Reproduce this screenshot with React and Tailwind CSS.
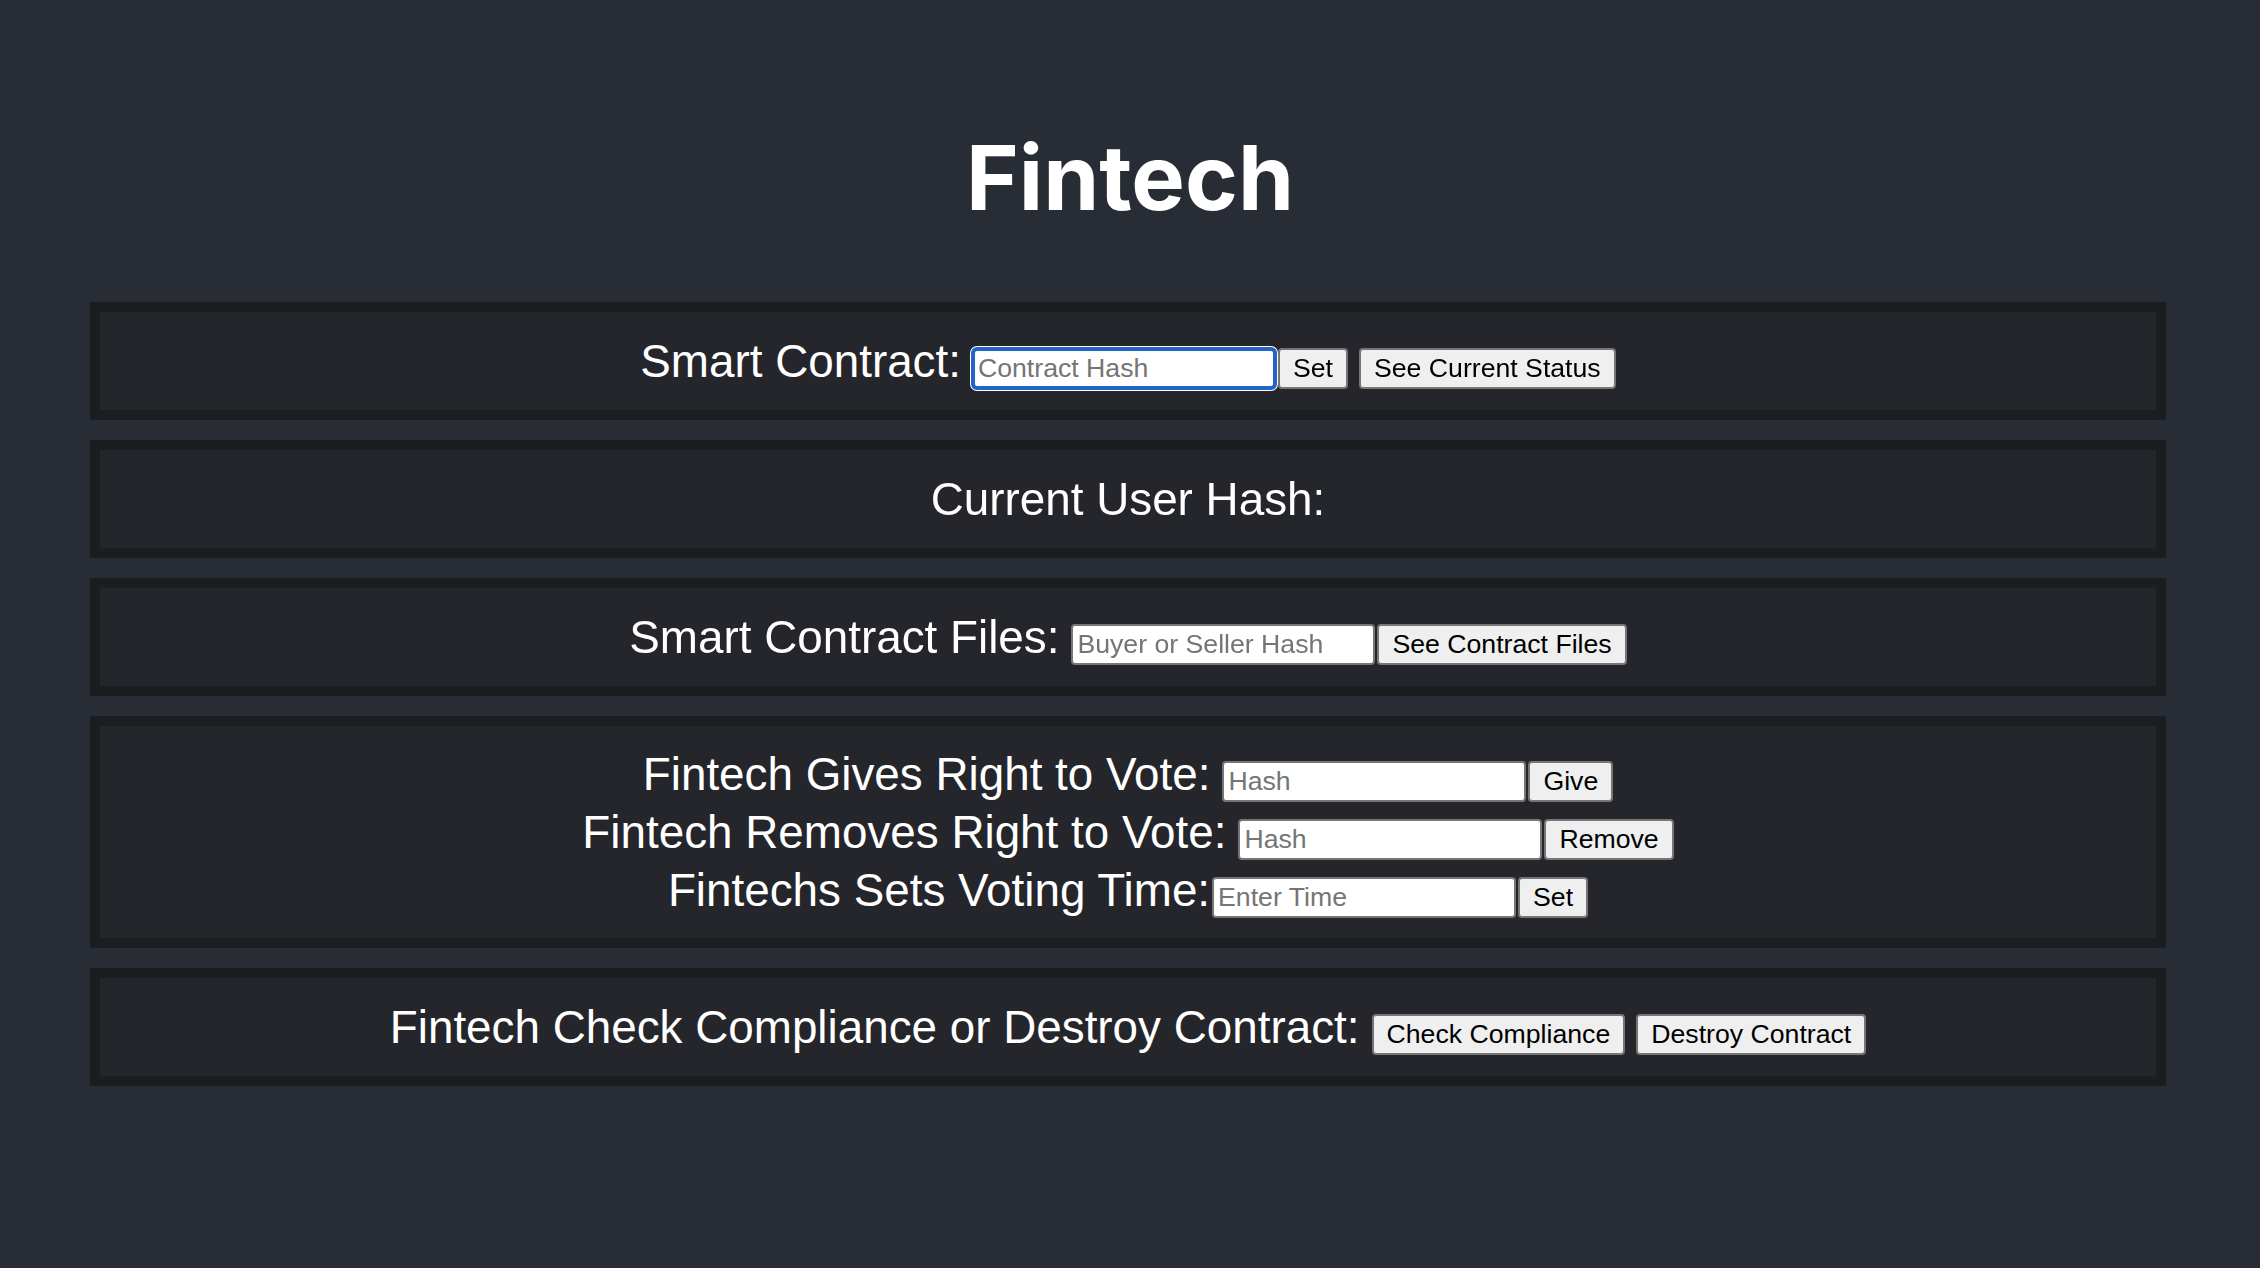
import React from "react";

const inputCls =
    "w-[304px] h-[41px] px-[4px] bg-white border-2 border-[#767676] rounded-[4px] text-[26.67px] text-black placeholder:text-[#757575] outline-none"
const focusCls =
    "w-[304px] h-[41px] px-[3px] bg-white border-[3px] border-[#2563cc] rounded-[5px] text-[26.67px] text-black placeholder:text-[#757575] outline-none shadow-[0_0_0_1px_#2563cc,0_0_0_2px_#ffffff]"
const btnCls =
    "h-[41px] px-[13px] bg-[#efefef] border-2 border-[#767676] rounded-[4px] text-[26.67px] text-black leading-none"

function Box({children, tall}) {
    return (
        <div
            className={
                "border-[10px] border-[#1c1d21] bg-[#25262b] flex flex-col justify-center pt-[2px] " +
                (tall ? "h-[232px]" : "h-[118px]")
            }
        >
            {children}
        </div>
    )
}

function Row({children}) {
    return <div className="flex justify-center items-baseline text-white">{children}</div>
}

export default function App() {
    return (
        <div
            className="w-[2260px] h-[1268px] bg-[#282c34] overflow-hidden"
            style={{fontFamily: '"Liberation Sans", Arial, sans-serif'}}
        >
            <h1
                className="pt-[133px] mb-[80px] text-center text-white font-bold text-[90px] leading-none h-[222px]"
                style={{fontFamily: 'Inter, "Liberation Sans", sans-serif'}}
            >
                Fintech
            </h1>

            <div className="ml-[90px] w-[2076px] flex flex-col gap-[20px] text-[45.8px]">
                <Box>
                    <Row>
                        <span className="mr-[11px]">Smart Contract:</span>
                        <input className={focusCls} placeholder="Contract Hash" autoFocus/>
                        <button className={btnCls + " ml-[2px]"}>Set</button>
                        <button className={btnCls + " ml-[11px]"}>See Current Status</button>
                    </Row>
                </Box>

                <Box>
                    <Row>
                        <span>Current User Hash:</span>
                    </Row>
                </Box>

                <Box>
                    <Row>
                        <span className="mr-[12px]">Smart Contract Files:</span>
                        <input className={inputCls} placeholder="Buyer or Seller Hash"/>
                        <button className={btnCls + " ml-[2px]"}>See Contract Files</button>
                    </Row>
                </Box>

                <Box tall>
                    <div className="flex flex-col">
                        <div className="h-[58px] flex flex-col justify-center">
                            <Row>
                                <span className="mr-[12px]">Fintech Gives Right to Vote:</span>
                                <input className={inputCls} placeholder="Hash"/>
                                <button className={btnCls + " ml-[2px]"}>Give</button>
                            </Row>
                        </div>
                        <div className="h-[58px] flex flex-col justify-center">
                            <Row>
                                <span className="mr-[12px]">Fintech Removes Right to Vote:</span>
                                <input className={inputCls} placeholder="Hash"/>
                                <button className={btnCls + " ml-[2px]"}>Remove</button>
                            </Row>
                        </div>
                        <div className="h-[58px] flex flex-col justify-center">
                            <Row>
                                <span className="mr-[2px]">Fintechs Sets Voting Time:</span>
                                <input className={inputCls} placeholder="Enter Time"/>
                                <button className={btnCls + " ml-[2px]"}>Set</button>
                            </Row>
                        </div>
                    </div>
                </Box>

                <Box>
                    <Row>
                        <span className="mr-[12px]">Fintech Check Compliance or Destroy Contract:</span>
                        <button className={btnCls}>Check Compliance</button>
                        <button className={btnCls + " ml-[11px]"}>Destroy Contract</button>
                    </Row>
                </Box>
            </div>
        </div>
    )
}
